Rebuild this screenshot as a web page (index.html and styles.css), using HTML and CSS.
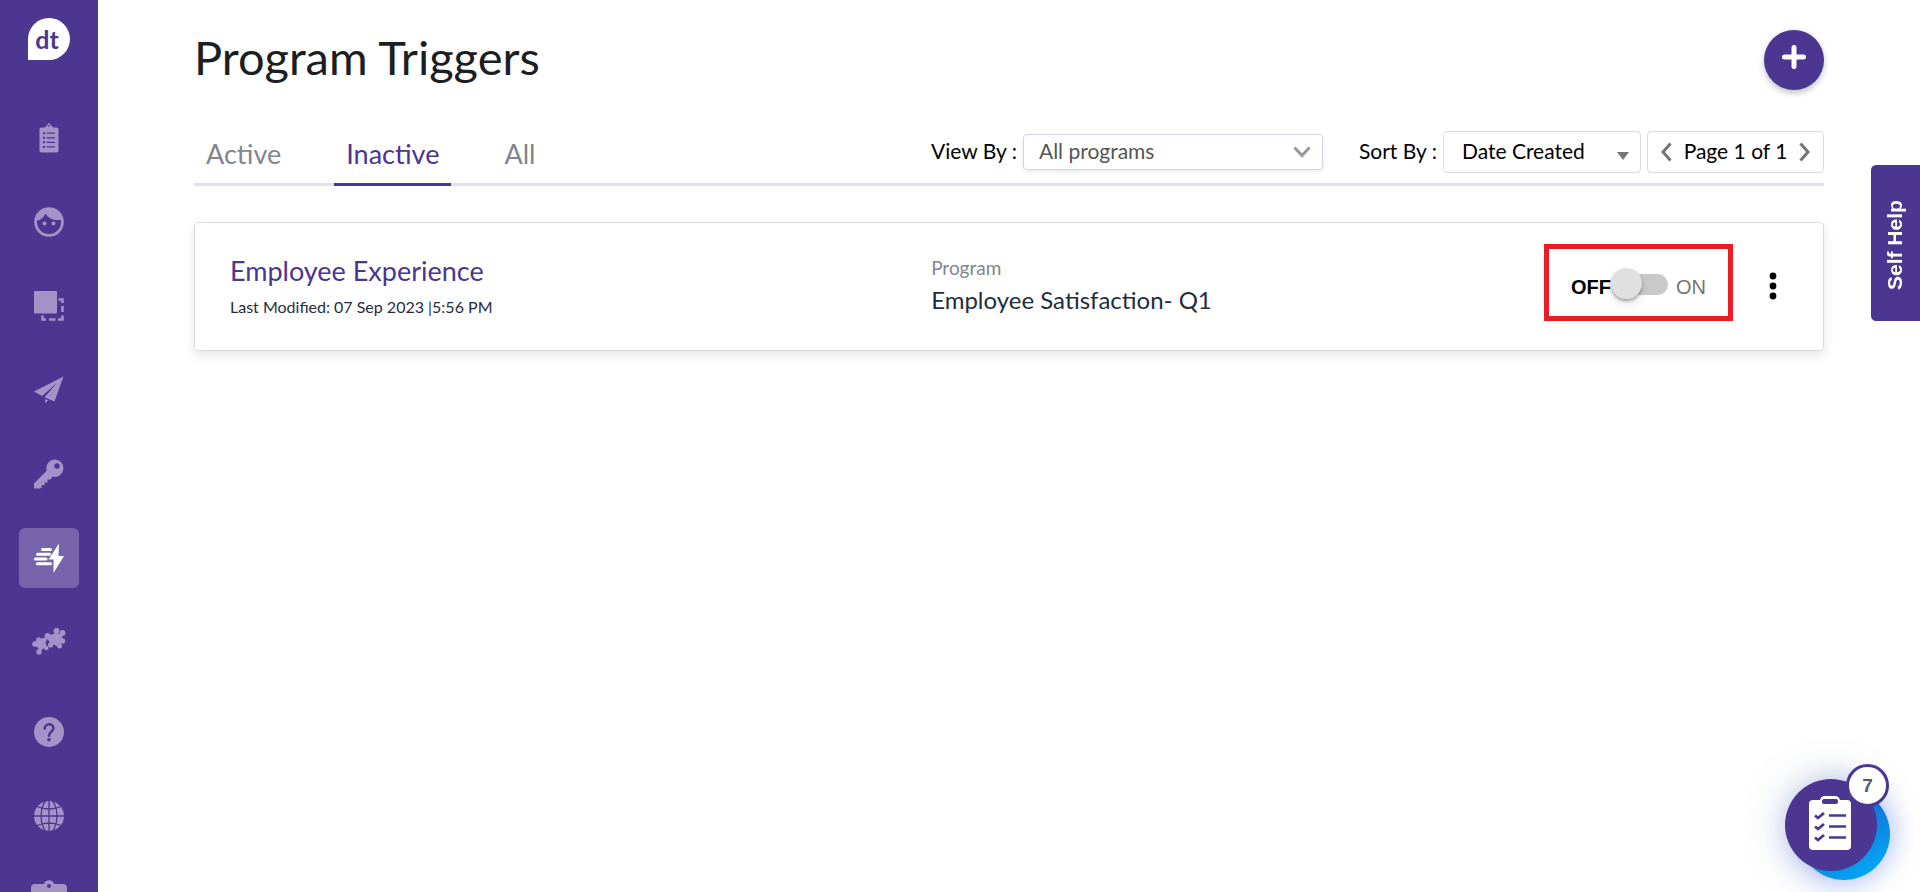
FILE: index.html
```
<!DOCTYPE html>
<html lang="en">
<head>
    <meta charset="UTF-8">
    <meta name="viewport" content="width=device-width, initial-scale=1.0">
    <title>Program Triggers</title>
    <link rel="stylesheet" href="styles.css">
</head>
<body>

    <!-- Sidebar -->
    <nav class="sidebar" aria-label="Main menu">
        <a href="#" class="logo">dt</a>
        <ul class="menu">
            <li><a href="#surveys" aria-label="Surveys">
                <svg width="30" height="30" viewBox="0 0 30 30" fill="currentColor">
                    <path fill-rule="evenodd" d="M7.500 4.500h3.500c.5-1.500 2-1.500 2.500-2.500.2-2.200 2.800-2.200 3 0 .5 1 2 1 2.500 2.500h3.500q2 0 2 2v21q0 2-2 2h-15q-2 0-2-2v-21q0-2 2-2zM9 9.200v2h2v-2zM12.500 9.600v1.200h8.500v-1.200zM9 13.800v2h2v-2zM12.500 14.200v1.200h8.500v-1.200zM9 18.300v2h2v-2zM12.500 18.700v1.200h8.500v-1.200zM9 22.900v2h2v-2zM12.500 23.300v1.200h8.500v-1.200zM14.300 2v1.400h1.400v-1.400z"/>
                </svg>
            </a></li>
            <li><a href="#contacts" aria-label="Contacts">
                <svg width="30" height="30" viewBox="0 0 30 30" fill="currentColor">
                    <circle cx="15" cy="15" r="13.400" fill="none" stroke="currentColor" stroke-width="2.800"/>
                    <path d="M2 14C7 13 10 10 11.500 6.500 15 12.500 21 14 28 12.500 26 5 21 1 15 1S2 6 2 14z"/>
                    <circle cx="10.500" cy="16.500" r="2"/>
                    <circle cx="19.500" cy="16.500" r="2"/>
                </svg>
            </a></li>
            <li><a href="#segments" aria-label="Segments">
                <svg width="30" height="30" viewBox="0 0 30 30" fill="currentColor">
                    <rect width="23" height="22.500" rx="1"/>
                    <path d="M24.500 8.500h4V12M28.500 15v6M28.500 24.500v4H24M21.500 28.500h-6.500M12 28.500H8.500V24.500" fill="none" stroke="currentColor" stroke-width="2.600"/>
                </svg>
            </a></li>
            <li><a href="#distribute" aria-label="Distribute">
                <svg width="30" height="30" viewBox="0 0 30 30" fill="currentColor">
                    <path d="M29.500 1.500L0 16.500l8 4.500L23 8 10.500 22.200 20.500 26.500zM11 24v4l3.200-2.600z"/>
                </svg>
            </a></li>
            <li><a href="#access" aria-label="Access">
                <svg width="30" height="30" viewBox="0 0 30 30" fill="currentColor">
                    <path fill-rule="evenodd" d="M21 .500a8.700 8.700 0 1 1-2.500 17.100L16.500 20.500h-3v3h-2.800v2.500h-3v2.500L6 29.500H0v-5L12.700 11.700A8.700 8.700 0 0 1 21 .500zM23 4.300a2.700 2.700 0 1 0 0 5.400 2.700 2.700 0 0 0 0-5.400z"/>
                </svg>
            </a></li>
            <li><a href="#triggers" class="current" aria-label="Program triggers" aria-current="page">
                <svg width="30" height="30" viewBox="0 0 30 30" fill="currentColor">
                    <path d="M25 .500L14.500 16.500h5L19.500 30 30 13h-5.500z"/>
                    <path d="M8.500 6.500h8M3.500 11.300h12M1.500 16h10.500M3.500 20.800h13" fill="none" stroke="currentColor" stroke-width="3" stroke-linecap="round"/>
                </svg>
            </a></li>
            <li><a href="#integrations" aria-label="Integrations">
                <svg width="34" height="30" viewBox="0 0 34 30" fill="currentColor">
                    <!-- large piece -->
                    <path d="M17 8l5-1 2-2 3 2 4-1-1 5 1.500 5-4.500 1-2 2-4-1.500-4 1 .5-4-2.500-2.500z"/>
                    <circle cx="24.500" cy="4" r="2.900"/>
                    <circle cx="30.500" cy="6" r="2.900"/>
                    <circle cx="30.500" cy="14" r="2.800"/>
                    <circle cx="27.500" cy="19" r="2.500"/>
                    <circle cx="18.500" cy="18" r="2.600"/>
                    <circle cx="15.500" cy="9" r="2.900"/>
                    <!-- small piece -->
                    <path d="M3 14l4-1 2-2 5 1-.5 4 2 5-4 .5-4 3-1.500-4-3.500-1.500z"/>
                    <circle cx="2.700" cy="17" r="2.600"/>
                    <circle cx="6.500" cy="12.500" r="2.300"/>
                    <circle cx="13" cy="12.500" r="2"/>
                    <circle cx="14.300" cy="21" r="2.300"/>
                    <circle cx="7" cy="25" r="2.700"/>
                </svg>
            </a></li>
            <li class="lower"><a href="#help" aria-label="Help">
                <svg width="30" height="30" viewBox="0 0 30 30" fill="currentColor">
                    <circle cx="15" cy="15" r="15"/>
                    <path class="cut" d="M10.800 11.500c0-5.500 8.600-5.500 8.600-.5 0 3.500-4.400 3.800-4.400 7.800" fill="none" stroke-width="2.600" stroke-linecap="round"/>
                    <circle class="dot" cx="15" cy="22.700" r="1.800"/>
                </svg>
            </a></li>
            <li><a href="#language" aria-label="Language">
                <svg width="30" height="30" viewBox="0 0 30 30" fill="currentColor">
                    <circle cx="15" cy="15" r="15"/>
                    <g class="cut" fill="none" stroke-width="1.300">
                        <path d="M15 0v30M0 15h30M3 5.500q12 5 24 0M3 24.500q12-5 24 0"/>
                        <ellipse cx="15" cy="15" rx="8" ry="16.500"/>
                    </g>
                </svg>
            </a></li>
            <li><a href="#account" aria-label="Account">
                <svg width="36" height="40" viewBox="0 0 36 40" fill="currentColor">
                    <path fill-rule="evenodd" d="M4 4h9c1-5 9-5 10 0h9q4 0 4 4v28q0 4-4 4h-28q-4 0-4-4v-28q0-4 4-4zM18 4a2 2 0 1 0 0 4 2 2 0 0 0 0-4z"/>
                </svg>
            </a></li>
        </ul>
    </nav>

    <!-- Page content -->
    <main class="content">
        <header class="page-header">
            <h1>Program Triggers</h1>
            <button type="button" class="add-button" aria-label="Add trigger">
                <svg width="24" height="24" viewBox="0 0 24 24"><path d="M12 2.500v19M2.500 12h19"/></svg>
            </button>
        </header>

        <div class="toolbar">
            <ul class="tabs">
                <li><a href="#active">Active</a></li>
                <li><a href="#inactive" class="selected">Inactive</a></li>
                <li><a href="#all">All</a></li>
            </ul>
            <div class="filters">
                <label for="view-by">View By :</label>
                <div class="select-wrap view-select">
                    <select id="view-by">
                        <option>All programs</option>
                    </select>
                    <svg width="18" height="12" viewBox="0 0 18 12"><path d="M1.500 1.500L9 9.500l7.500-8" fill="none" stroke="#999" stroke-width="3"/></svg>
                </div>
                <label for="sort-by">Sort By :</label>
                <div class="select-wrap sort-select">
                    <select id="sort-by">
                        <option>Date Created</option>
                    </select>
                    <svg width="12" height="8" viewBox="0 0 12 8"><path d="M0 0h12L6 8z" fill="#757575"/></svg>
                </div>
                <div class="pager">
                    <button type="button" aria-label="Previous page">
                        <svg width="12" height="20" viewBox="0 0 12 20"><path d="M10.500 1.500L3 10l7.500 8.500"/></svg>
                    </button>
                    <span>Page 1 of 1</span>
                    <button type="button" aria-label="Next page">
                        <svg width="12" height="20" viewBox="0 0 12 20"><path d="M1.500 1.500L9 10l-7.500 8.500"/></svg>
                    </button>
                </div>
            </div>
        </div>

        <!-- Trigger card -->
        <section class="card">
            <div class="trigger">
                <h2>Employee Experience</h2>
                <p>Last Modified: 07 Sep 2023 |5:56 PM</p>
            </div>
            <div class="program">
                <p class="program-label">Program</p>
                <p class="program-name">Employee Satisfaction- Q1</p>
            </div>
            <label class="toggle">
                <span class="off">OFF</span>
                <input type="checkbox" aria-label="Trigger on or off">
                <span class="on">ON</span>
            </label>
            <button type="button" class="more" aria-label="More options">
                <svg width="8" height="28" viewBox="0 0 8 28"><circle cx="4" cy="4" r="3.400"/><circle cx="4" cy="14" r="3.400"/><circle cx="4" cy="24" r="3.400"/></svg>
            </button>
        </section>
    </main>

    <!-- Floating widgets -->
    <button type="button" class="self-help">Self Help</button>

    <button type="button" class="checklist" aria-label="Checklist, 7 items">
        <span class="disc">
            <svg width="42" height="54" viewBox="0 0 42 54">
                <path d="M4 4h7q1-4 5-4h10q4 0 5 4h7q4 0 4 4v42q0 4-4 4h-34q-4 0-4-4v-42q0-4 4-4z" fill="#fff"/>
                <rect x="13" y="3" width="16" height="5" rx="2" fill="#4b3691"/>
                <path d="M6 19.500l3 2.500 6-5M6 30.500l3 2.500 6-5M6 41.500l3 2.500 6-5" fill="none" stroke="#4b3691" stroke-width="2.800"/>
                <path d="M20 19.500h17M20 30.500h17M20 41.500h17" stroke="#4b3691" stroke-width="2.400"/>
            </svg>
        </span>
        <span class="badge">7</span>
    </button>

</body>
</html>
```
FILE: styles.css
```
* {
    box-sizing: border-box;
}

body {
    display: flex;
    min-height: 100vh;
    margin: 0;
    font-family: "Lato", sans-serif;
    font-size: 21px;
    color: #000;
    background-color: #fff;
}

h1, h2, p, ul {
    margin: 0;
    padding: 0;
    font-weight: 400;
}

ul {
    list-style-type: none;
}

a {
    text-decoration: none;
}

button {
    padding: 0;
    border: 0;
    background: none;
    font: inherit;
    cursor: pointer;
}

svg {
    display: block;
    flex-shrink: 0;
}

/* Sidebar */
.sidebar {
    flex: 0 0 98px;
    display: flex;
    flex-direction: column;
    align-items: center;
    gap: 48px;
    height: 100vh;
    padding-top: 18px;
    overflow: hidden;
    background-color: #4b3691;
}

.logo {
    flex: 0 0 42px;
    width: 42px;
    padding-right: 4px;
    border-radius: 50% 50% 50% 0;
    background-color: #fff;
    color: #4b3691;
    font-size: 25px;
    font-weight: 700;
    line-height: 42px;
    text-align: center;
}

.menu {
    display: flex;
    flex-direction: column;
    gap: 24px;
}

.menu a {
    display: flex;
    align-items: center;
    justify-content: center;
    width: 60px;
    height: 60px;
    border-radius: 6px;
    color: #a194c7;
}

.menu .current {
    background-color: #7765ac;
    color: #fff;
}

.menu .lower {
    padding-top: 6px;
}

.cut {
    stroke: #4b3691;
}

.dot {
    fill: #4b3691;
}

/* Content */
.content {
    flex: 1;
    padding: 30px 96px;
}

.page-header {
    display: flex;
    justify-content: space-between;
    align-items: center;
    height: 60px;
}

h1 {
    font-size: 47px;
    line-height: 54px;
    padding-bottom: 6px;
    color: #1d1e22;
}

.add-button {
    display: flex;
    justify-content: center;
    width: 60px;
    height: 60px;
    padding-top: 15px;
    border-radius: 50%;
    background-color: #4b3691;
    box-shadow: 0 3px 6px rgba(0, 0, 0, 0.25);
}

.add-button path {
    fill: none;
    stroke: #fff;
    stroke-width: 5;
    stroke-linecap: round;
}

.toolbar {
    display: flex;
    justify-content: space-between;
    align-items: flex-end;
    margin-top: 41px;
    border-bottom: 3px solid #e1e3ec;
}

.tabs {
    display: flex;
    gap: 41px;
    margin-bottom: -3px;
}

.tabs a {
    display: block;
    padding: 6px 12px 13px;
    border-bottom: 3px solid transparent;
    font-size: 27px;
    line-height: 32px;
    color: #82868f;
}

.tabs .selected {
    border-color: #4b3691;
    color: #4b3691;
}

.filters {
    display: flex;
    align-items: center;
    gap: 6px;
    margin-bottom: 10px;
}

.filters label,
.pager span {
    padding-bottom: 4px;
}

.select-wrap {
    position: relative;
}

.select-wrap select {
    width: 100%;
    height: 42px;
    padding: 0 18px 4px;
    border: 1px solid #dcdcdc;
    border-radius: 4px;
    background-color: #fff;
    font: inherit;
    color: #000;
    appearance: none;
}

.select-wrap svg {
    position: absolute;
    right: 12px;
    top: 50%;
    pointer-events: none;
}

.view-select {
    width: 300px;
    margin-right: 30px;
}

.view-select select {
    height: 36px;
    padding: 0 15px 4px;
    border-color: #d5d3e3;
    color: #555;
    box-shadow: 0 2px 4px rgba(0, 0, 0, 0.08);
}

.view-select svg {
    margin-top: -6px;
}

.sort-select {
    width: 198px;
}

.pager {
    display: flex;
    align-items: center;
    justify-content: space-between;
    width: 177px;
    height: 42px;
    padding: 0 12px;
    border: 1px solid #dcdcdc;
    border-radius: 4px;
}

.pager path {
    fill: none;
    stroke: #757575;
    stroke-width: 3;
}

/* Card */
.card {
    display: grid;
    grid-template-columns: 45% 1fr auto auto;
    align-items: start;
    margin-top: 36px;
    padding: 21px 46px 29px 35px;
    border: 1px solid #dcdcdc;
    border-radius: 4px;
    box-shadow: 0 5px 12px rgba(0, 0, 0, 0.1);
}

.trigger {
    padding-top: 9px;
}

.trigger h2 {
    font-size: 27px;
    line-height: 36px;
    color: #4b3691;
}

.trigger p {
    margin-top: 6px;
    font-size: 16px;
    line-height: 24px;
    color: #1f2d3d;
}

.program {
    padding: 10px 0 0 5px;
}

.program-label {
    font-size: 19px;
    line-height: 28px;
    color: #82868f;
}

.program-name {
    font-size: 24px;
    line-height: 36px;
    color: #1f2d3d;
}

.toggle {
    display: flex;
    align-items: center;
    height: 77px;
    margin-right: 36px;
    padding: 8px 22px 0;
    border: 5px solid #ed1c24;
    font-family: "Liberation Sans", Arial, sans-serif;
    font-size: 20px;
    line-height: 24px;
}

.toggle .off {
    font-weight: 700;
}

.toggle .on {
    color: #757575;
}

.toggle input {
    position: relative;
    width: 43px;
    height: 21px;
    margin: 0 8px 4px 14px;
    border-radius: 11px;
    background-color: #c9c9c9;
    appearance: none;
}

.toggle input::before {
    content: "";
    position: absolute;
    left: -14px;
    top: -6px;
    width: 31px;
    height: 31px;
    border-radius: 50%;
    background-color: #e0e0e0;
    box-shadow: 0 2px 3px rgba(0, 0, 0, 0.3), 0 5px 8px rgba(0, 0, 0, 0.1);
}

.more {
    margin-top: 28px;
}

/* Floating widgets */
.self-help {
    position: fixed;
    right: 0;
    top: 165px;
    width: 49px;
    height: 156px;
    padding-bottom: 4px;
    border-radius: 0 5px 5px 0;
    background-color: #4b3691;
    color: #fff;
    font-family: "Liberation Sans", Arial, sans-serif;
    font-weight: 700;
    writing-mode: vertical-rl;
    transform: rotate(180deg);
}

.checklist {
    position: fixed;
    right: 43px;
    bottom: 21px;
    width: 92px;
    height: 92px;
    border-radius: 50%;
    box-shadow: 0 0 40px rgba(75, 100, 160, 0.35);
}

/* Blue disc behind the button */
.checklist::before {
    content: "";
    position: absolute;
    left: 13px;
    top: 9px;
    width: 92px;
    height: 92px;
    border-radius: 50%;
    background: linear-gradient(150deg, #1565d8 30%, #00b0f5 95%);
    box-shadow: 0 0 30px rgba(60, 100, 240, 0.4);
}

.disc {
    position: relative;
    display: flex;
    justify-content: center;
    height: 92px;
    padding-top: 17px;
    padding-right: 2px;
    border-radius: 50%;
    background-color: #4b3691;
}

.badge {
    position: absolute;
    right: -12px;
    top: -15px;
    width: 43px;
    height: 43px;
    border: 3px solid #4b3691;
    border-radius: 50%;
    background-color: #fff;
    color: #555b6e;
    font-family: "Liberation Sans", Arial, sans-serif;
    font-size: 19px;
    font-weight: 700;
    line-height: 37px;
    text-align: center;
}
```
